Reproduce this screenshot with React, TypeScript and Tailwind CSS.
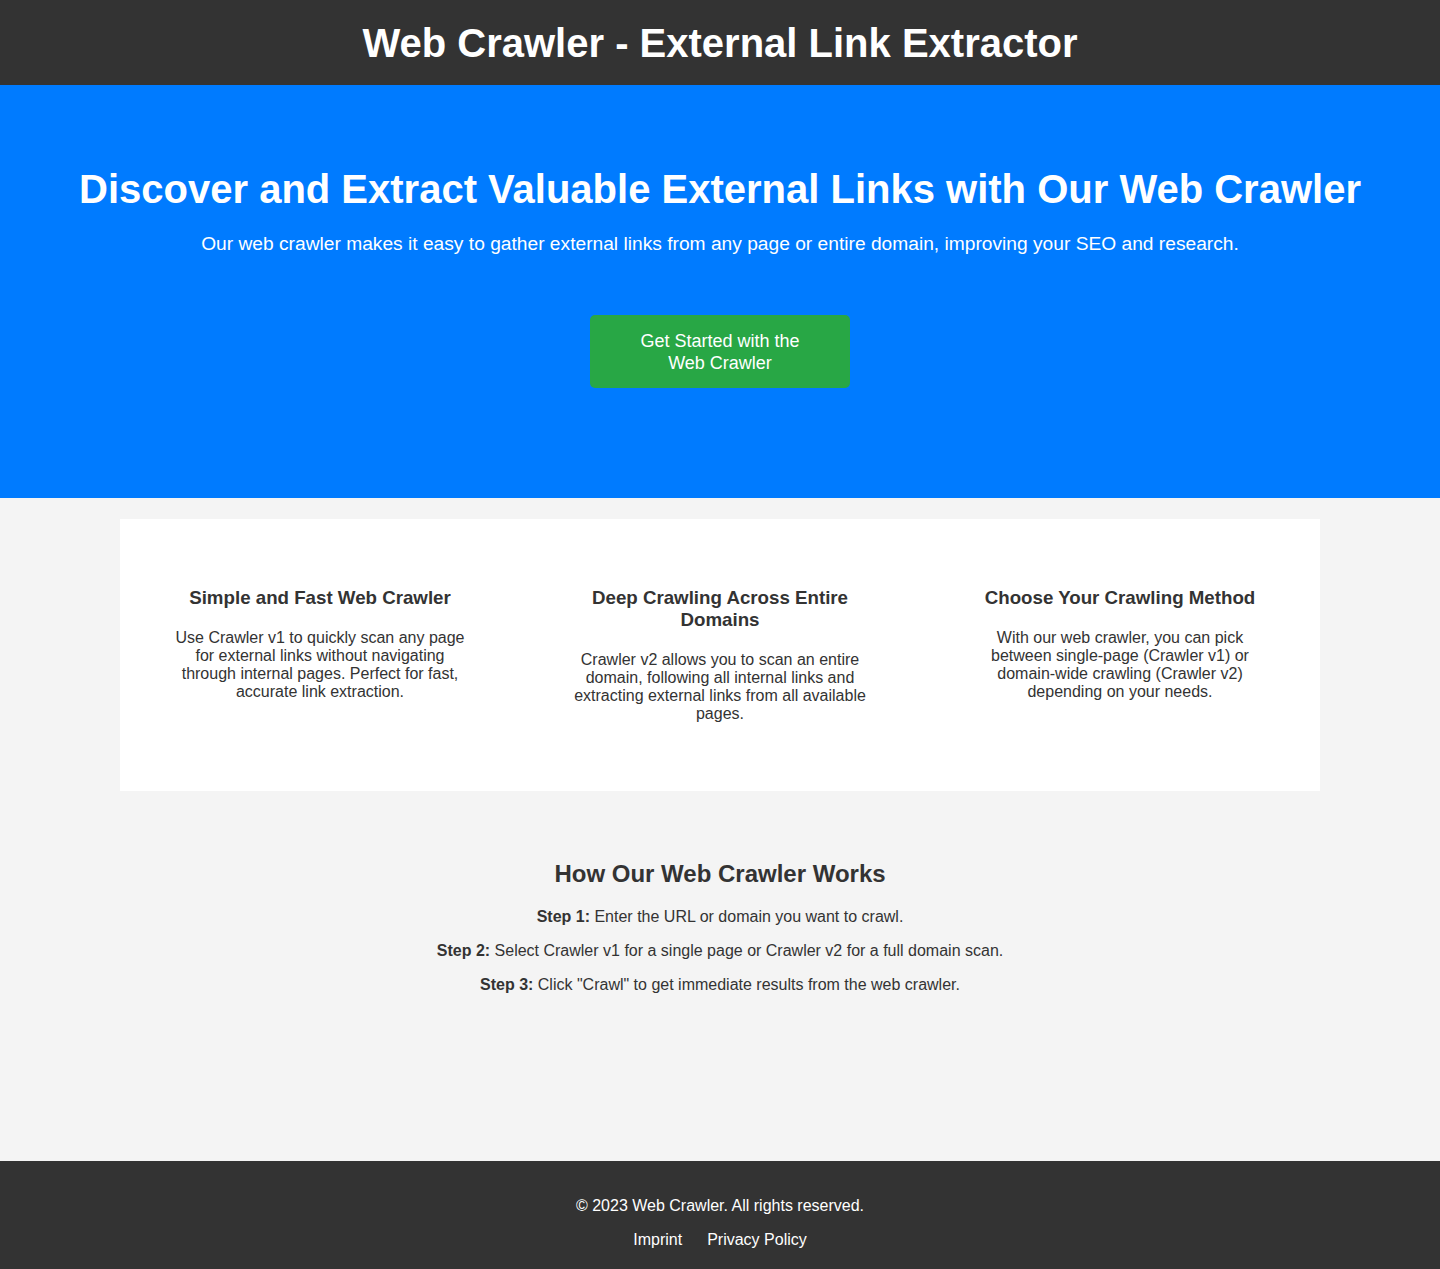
export default function App() {
  const features = [
    {
      title: "Simple and Fast Web Crawler",
      text: "Use Crawler v1 to quickly scan any page for external links without navigating through internal pages. Perfect for fast, accurate link extraction.",
    },
    {
      title: "Deep Crawling Across Entire Domains",
      text: "Crawler v2 allows you to scan an entire domain, following all internal links and extracting external links from all available pages.",
    },
    {
      title: "Choose Your Crawling Method",
      text: "With our web crawler, you can pick between single-page (Crawler v1) or domain-wide crawling (Crawler v2) depending on your needs.",
    },
  ]

  return (
    <div className="min-h-screen bg-[#f4f4f4] text-[#333] font-['Liberation_Sans',Arial,sans-serif]">
      <header className="bg-[#333] text-white text-center pt-[20px] pb-[19px]">
        <h1 className="text-[40px] leading-[46px] font-bold">Web Crawler - External Link Extractor</h1>
      </header>

      <section className="bg-[#007bff] text-white text-center pt-[81px] pb-[110px] px-5">
        <h2 className="text-[40px] leading-[46px] font-bold">
          Discover and Extract Valuable External Links with Our Web Crawler
        </h2>
        <p className="mt-[21px] text-[19.2px] leading-[22px]">
          Our web crawler makes it easy to gather external links from any page or entire domain, improving your SEO and
          research.
        </p>
        <div className="mt-[60px] flex justify-center">
          <a
            href="#"
            className="w-[260px] px-[40px] pt-[15px] pb-[14px] bg-[#28a745] rounded-[5px] text-[18px] leading-[22px] text-white"
          >
            Get Started with the Web Crawler
          </a>
        </div>
      </section>

      <section className="mx-[120px] mt-[21px] bg-white flex justify-around py-[68px]">
        {features.map((f) => (
          <div key={f.title} className="w-[300px] text-center">
            <h3 className="text-[18.72px] leading-[22px] font-bold">{f.title}</h3>
            <p className="mt-[20px] text-[16px] leading-[18px]">{f.text}</p>
          </div>
        ))}
      </section>

      <section className="text-center pt-[69px] pb-[167px]">
        <h2 className="text-[24px] leading-[28px] font-bold">How Our Web Crawler Works</h2>
        <div className="mt-[20px] flex flex-col gap-[16px] text-[16px] leading-[18px]">
          <p>
            <strong>Step 1:</strong> Enter the URL or domain you want to crawl.
          </p>
          <p>
            <strong>Step 2:</strong> Select Crawler v1 for a single page or Crawler v2 for a full domain scan.
          </p>
          <p>
            <strong>Step 3:</strong> Click "Crawl" to get immediate results from the web crawler.
          </p>
        </div>
      </section>

      <footer className="bg-[#333] text-white text-center pt-[36px] pb-[20px] text-[16px] leading-[18px]">
        <p>© 2023 Web Crawler. All rights reserved.</p>
        <div className="mt-[16px] flex justify-center gap-[25px]">
          <a href="#">Imprint</a>
          <a href="#">Privacy Policy</a>
        </div>
      </footer>
    </div>
  )
}
